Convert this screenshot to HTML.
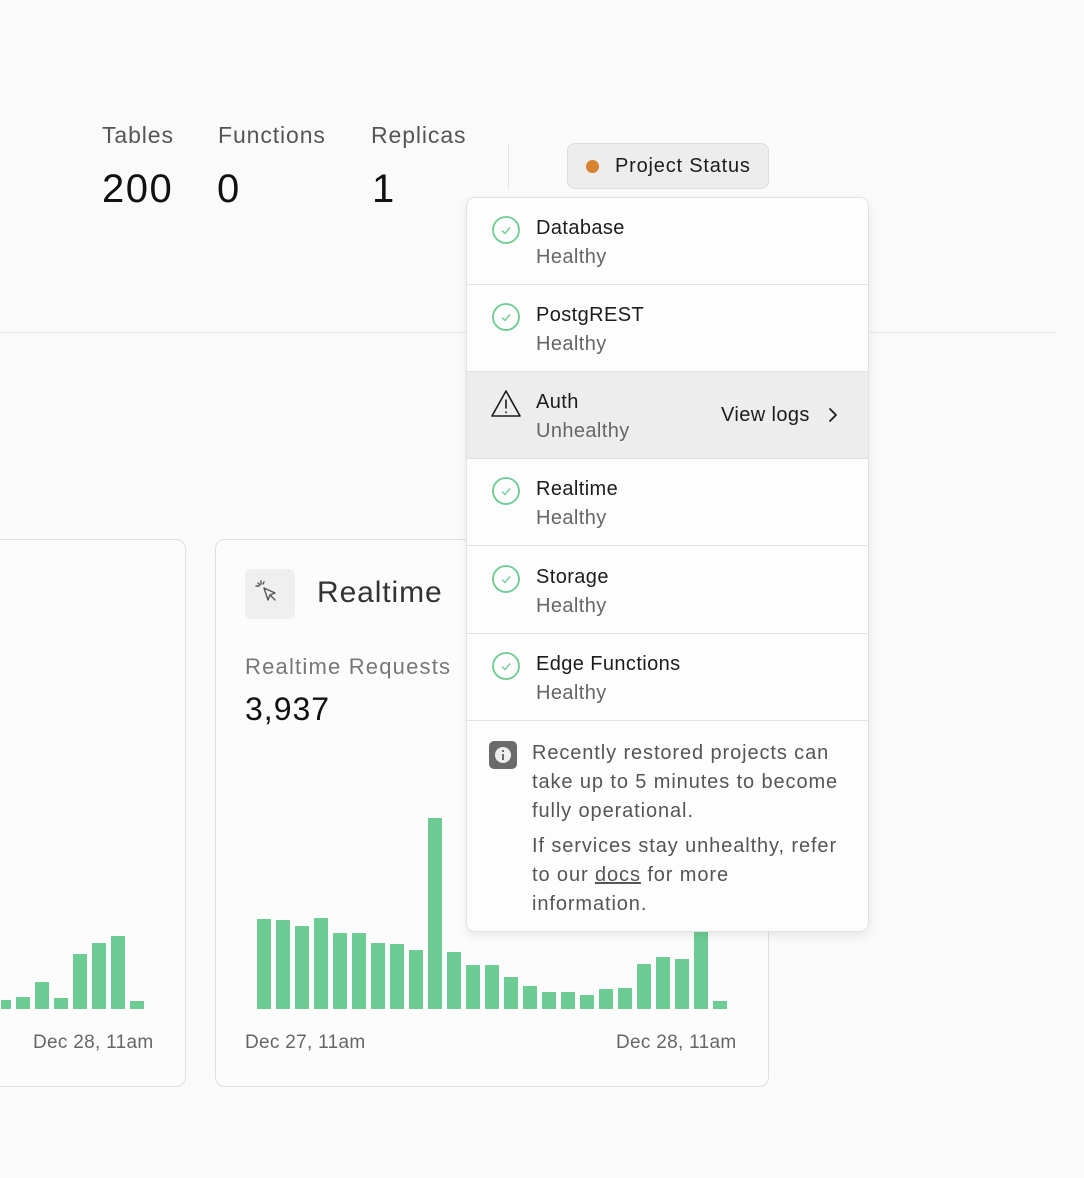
<!DOCTYPE html>
<html><head><meta charset="utf-8"><style>
*{margin:0;padding:0;box-sizing:border-box}
body{width:1084px;height:1178px;background:#fafafa;font-family:"Liberation Sans",sans-serif;position:relative;overflow:hidden;color:#1c1c1c}
.a{position:absolute;white-space:nowrap}
.lbl{font-size:23px;color:#555;letter-spacing:0.9px}
.num{font-size:40px;color:#111;letter-spacing:1.5px}
.card{position:absolute;background:#fcfcfc;border:1px solid #e0e0e0;border-radius:10px}
.dd{position:absolute;left:466px;top:197px;width:403px;height:735px;background:#fdfdfd;border:1px solid #e2e2e2;border-radius:9px;box-shadow:0 4px 10px rgba(0,0,0,0.08);overflow:hidden}
.row{position:absolute;left:0;width:100%;height:87px;border-bottom:1px solid #e2e2e2}
.row .t{position:absolute;left:69px;top:19px;font-size:20px;color:#1c1c1c;letter-spacing:0.4px}
.row .s{position:absolute;left:69px;top:48px;font-size:20px;color:#666;letter-spacing:0.4px}
.row svg{position:absolute;left:23px;top:16px}
.info{font-size:20px;color:#555;line-height:29px;letter-spacing:0.9px}
</style></head><body>
<div class="a lbl" style="left:102px;top:122px">Tables</div>
<div class="a lbl" style="left:218px;top:122px">Functions</div>
<div class="a lbl" style="left:371px;top:122px">Replicas</div>
<div class="a num" style="left:102px;top:167px">200</div>
<div class="a num" style="left:217px;top:167px">0</div>
<div class="a num" style="left:372px;top:167px">1</div>
<div class="a" style="left:508px;top:143px;width:1px;height:46px;background:#e2e2e2"></div>
<div class="a" style="left:567px;top:143px;width:202px;height:46px;background:#ededed;border:1px solid #dcdcdc;border-radius:8px"></div>
<div class="a" style="left:586px;top:160px;width:13px;height:13px;border-radius:50%;background:#d9822f"></div>
<div class="a" style="left:615px;top:155px;font-size:20px;color:#1c1c1c;letter-spacing:0.8px">Project Status</div>
<div class="a" style="left:0;top:332px;width:1056px;height:1px;background:#e5e5e5"></div>

<div class="card" style="left:-20px;top:539px;width:206px;height:548px">
<svg class="a" style="left:20px;top:0" width="186" height="548"><g fill="#6ccc93">
<rect x="-10" y="460" width="20" height="9"/><rect x="15" y="457" width="14" height="12"/><rect x="34" y="442" width="14" height="27"/><rect x="53" y="458" width="14" height="11"/><rect x="72" y="414" width="14" height="55"/><rect x="91" y="403" width="14" height="66"/><rect x="110" y="396" width="14" height="73"/><rect x="129" y="461" width="14" height="8"/></g></svg>
<div class="a" style="left:52px;top:492px;font-size:19px;color:#666;letter-spacing:0.3px">Dec 28, 11am</div>
</div>

<div class="card" style="left:215px;top:539px;width:554px;height:548px">
<div class="a" style="left:29px;top:29px;width:50px;height:50px;background:#efefef;border-radius:6px">
<svg width="50" height="50" viewBox="0 0 50 50" fill="none" stroke="#555" stroke-width="1.4" stroke-linecap="round" stroke-linejoin="round"><path d="M19 19l4 12 2-5 5-2z"/><path d="M25 26l5 5"/><path d="M16 12v3M11 17h3M13 14l2 2M19 13l-1 2"/></svg></div>
<div class="a" style="left:101px;top:36px;font-size:30px;color:#333;letter-spacing:0.9px">Realtime</div>
<div class="a" style="left:29px;top:114px;font-size:22px;color:#777;letter-spacing:1.2px">Realtime Requests</div>
<div class="a" style="left:29px;top:151px;font-size:32px;color:#111;letter-spacing:1px">3,937</div>
<svg class="a" style="left:0;top:0" width="554" height="548"><g fill="#6ccc93">
<rect x="41" y="379" width="14" height="90"/><rect x="60" y="380" width="14" height="89"/><rect x="79" y="386" width="14" height="83"/><rect x="98" y="378" width="14" height="91"/><rect x="117" y="393" width="14" height="76"/><rect x="136" y="393" width="14" height="76"/><rect x="155" y="403" width="14" height="66"/><rect x="174" y="404" width="14" height="65"/><rect x="193" y="410" width="14" height="59"/><rect x="212" y="278" width="14" height="191"/><rect x="231" y="412" width="14" height="57"/><rect x="250" y="425" width="14" height="44"/><rect x="269" y="425" width="14" height="44"/><rect x="288" y="437" width="14" height="32"/><rect x="307" y="446" width="14" height="23"/><rect x="326" y="452" width="14" height="17"/><rect x="345" y="452" width="14" height="17"/><rect x="364" y="455" width="14" height="14"/><rect x="383" y="449" width="14" height="20"/><rect x="402" y="448" width="14" height="21"/><rect x="421" y="424" width="14" height="45"/><rect x="440" y="417" width="14" height="52"/><rect x="459" y="419" width="14" height="50"/><rect x="478" y="380" width="14" height="89"/><rect x="497" y="461" width="14" height="8"/></g></svg>
<div class="a" style="left:29px;top:492px;font-size:19px;color:#666;letter-spacing:0.3px">Dec 27, 11am</div>
<div class="a" style="left:400px;top:492px;font-size:19px;color:#666;letter-spacing:0.3px">Dec 28, 11am</div>
</div>

<div class="dd">
<div class="row" style="top:0"><svg width="32" height="32" viewBox="0 0 32 32" fill="none" stroke="#6ccc93" stroke-width="1.8"><circle cx="16" cy="16" r="13"/><path d="M12 16.5l3 3 5-6" stroke-width="1.4"/></svg><div class="t">Database</div><div class="s">Healthy</div></div>
<div class="row" style="top:87px"><svg width="32" height="32" viewBox="0 0 32 32" fill="none" stroke="#6ccc93" stroke-width="1.8"><circle cx="16" cy="16" r="13"/><path d="M12 16.5l3 3 5-6" stroke-width="1.4"/></svg><div class="t">PostgREST</div><div class="s">Healthy</div></div>
<div class="row" style="top:174px;background:#ededed"><svg width="32" height="32" viewBox="0 0 32 32" fill="none" stroke="#1c1c1c" stroke-width="1.6" stroke-linejoin="round" stroke-linecap="round"><path d="M16 3L2 28h28z"/><path d="M16 12v8M16 24v.5"/></svg><div class="t">Auth</div><div class="s">Unhealthy</div><div class="a" style="left:254px;top:32px;font-size:20px;letter-spacing:0.4px">View logs</div><svg style="left:358px;top:34px" width="16" height="18" viewBox="0 0 16 18" fill="none" stroke="#1c1c1c" stroke-width="1.8" stroke-linecap="round" stroke-linejoin="round"><path d="M5 3l6 6-6 6"/></svg></div>
<div class="row" style="top:261px"><svg width="32" height="32" viewBox="0 0 32 32" fill="none" stroke="#6ccc93" stroke-width="1.8"><circle cx="16" cy="16" r="13"/><path d="M12 16.5l3 3 5-6" stroke-width="1.4"/></svg><div class="t">Realtime</div><div class="s">Healthy</div></div>
<div class="row" style="top:349px"><svg width="32" height="32" viewBox="0 0 32 32" fill="none" stroke="#6ccc93" stroke-width="1.8"><circle cx="16" cy="16" r="13"/><path d="M12 16.5l3 3 5-6" stroke-width="1.4"/></svg><div class="t">Storage</div><div class="s">Healthy</div></div>
<div class="row" style="top:436px"><svg width="32" height="32" viewBox="0 0 32 32" fill="none" stroke="#6ccc93" stroke-width="1.8"><circle cx="16" cy="16" r="13"/><path d="M12 16.5l3 3 5-6" stroke-width="1.4"/></svg><div class="t">Edge Functions</div><div class="s">Healthy</div></div>
<div class="a" style="left:22px;top:543px;width:28px;height:28px;background:#6b6b6b;border-radius:5px"><div class="a" style="left:6px;top:6px;width:16px;height:16px;border-radius:50%;background:#eee"></div><div class="a" style="left:13px;top:13px;width:2px;height:6px;background:#6b6b6b"></div><div class="a" style="left:13px;top:9px;width:2px;height:2px;background:#6b6b6b"></div></div>
<div class="a info" style="left:65px;top:541px">Recently restored projects can<br>take up to 5 minutes to become<br>fully operational.</div>
<div class="a info" style="left:65px;top:634px">If services stay unhealthy, refer<br>to our <span style="text-decoration:underline">docs</span> for more<br>information.</div>
</div>
</body></html>
